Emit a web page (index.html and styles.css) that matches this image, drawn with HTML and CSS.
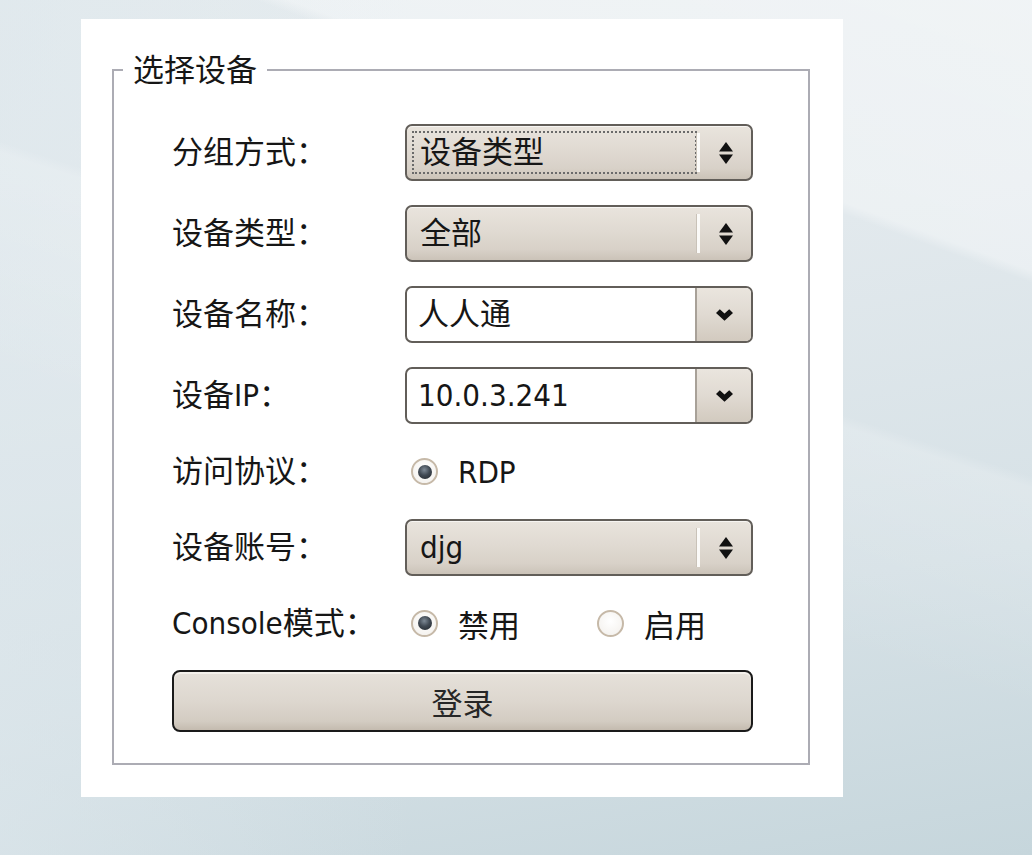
FILE: index.html
```html
<!DOCTYPE html>
<html lang="zh-CN">
<head>
<meta charset="utf-8">
<title>选择设备</title>
<link rel="stylesheet" href="styles.css">
</head>
<body>
<div class="panel">
  <fieldset class="group">
    <legend class="group-title">选择设备</legend>
    <div class="form">
      <div class="lbl">分组方式：</div>
      <div class="combo ro">
        <span class="val focus">设备类型</span>
        <span class="btn"><svg width="16" height="28" viewBox="0 0 16 28"><polygon points="1,12.5 8,3 15,12.5"/><polygon points="1,15.5 15,15.5 8,25"/></svg></span>
      </div>

      <div class="lbl">设备类型：</div>
      <div class="combo ro">
        <span class="val">全部</span>
        <span class="btn"><svg width="16" height="28" viewBox="0 0 16 28"><polygon points="1,12.5 8,3 15,12.5"/><polygon points="1,15.5 15,15.5 8,25"/></svg></span>
      </div>

      <div class="lbl">设备名称：</div>
      <div class="combo ed">
        <span class="val">人人通</span>
        <span class="btn"><svg width="17" height="12" viewBox="0 0 17 12"><polygon points="0,4 3.8,0.3 8.5,4.6 13.2,0.3 17,4 8.5,11.8"/></svg></span>
      </div>

      <div class="lbl">设备IP：</div>
      <div class="combo ed">
        <span class="val">10.0.3.241</span>
        <span class="btn"><svg width="17" height="12" viewBox="0 0 17 12"><polygon points="0,4 3.8,0.3 8.5,4.6 13.2,0.3 17,4 8.5,11.8"/></svg></span>
      </div>

      <div class="lbl">访问协议：</div>
      <div class="radios">
        <span class="opt"><span class="radio on"></span><span>RDP</span></span>
      </div>

      <div class="lbl">设备账号：</div>
      <div class="combo ro">
        <span class="val">djg</span>
        <span class="btn"><svg width="16" height="28" viewBox="0 0 16 28"><polygon points="1,12.5 8,3 15,12.5"/><polygon points="1,15.5 15,15.5 8,25"/></svg></span>
      </div>

      <div class="lbl">Console模式：</div>
      <div class="radios">
        <span class="opt first"><span class="radio on"></span><span>禁用</span></span>
        <span class="opt"><span class="radio"></span><span>启用</span></span>
      </div>

      <button class="login" type="button">登录</button>
    </div>
  </fieldset>
</div>
</body>
</html>
```

FILE: styles.css
```css
html, body {
  margin: 0;
  padding: 0;
}

body {
  width: 1032px;
  height: 855px;
  overflow: hidden;
  font-family: "DejaVu Sans Condensed", "DejaVu Sans", "Noto Sans CJK SC", sans-serif;
  font-size: 31px;
  color: #161616;
  background:
    linear-gradient(200deg, rgba(255,255,255,0.45) 0%, rgba(255,255,255,0.35) 22%, rgba(255,255,255,0) 23%),
    linear-gradient(198deg, rgba(255,255,255,0) 40%, rgba(255,255,255,0.18) 41%, rgba(255,255,255,0) 60%),
    linear-gradient(90deg, rgba(221,231,236,0.6) 0%, rgba(221,231,236,0) 40%),
    linear-gradient(170deg, #e6ecef 0%, #e2e9ed 35%, #d6e1e6 70%, #c6d6dc 100%);
  padding-top: 19px;
  box-sizing: border-box;
}

.panel {
  margin-left: 81px;
  width: 762px;
  height: 778px;
  background: #ffffff;
  padding-top: 34px;
  box-sizing: border-box;
}

.group {
  margin: 0 0 0 31px;
  width: 698px;
  box-sizing: border-box;
  border: 2px solid #acacb4;
  padding: 37px 0 31px 0;
}

.group-title {
  margin-left: 9px;
  padding: 0 10px;
  line-height: 34px;
}

.form {
  margin-left: 58px;
  display: grid;
  grid-template-columns: 233px 348px;
  grid-template-rows: 57px 57px 57px 57px 47px 57px 46px 62px;
  row-gap: 24px;
  align-items: center;
}

.lbl {
  white-space: nowrap;
  line-height: 1;
}

.combo {
  height: 57px;
  box-sizing: border-box;
  border: 2px solid #625e59;
  border-radius: 7px;
  display: flex;
  align-items: stretch;
  overflow: hidden;
}

.combo.ro {
  background: linear-gradient(#e9e4dd 0%, #e0dad2 45%, #d8d1c8 80%, #cbc3b8 100%);
  box-shadow: inset 0 1px 0 #f7f5f2;
}

.combo.ed {
  background: #ffffff;
}

.val {
  flex: 1;
  display: flex;
  align-items: center;
  padding-left: 11px;
  line-height: 1;
}

.combo.ro .val {
  margin: 5px 0 5px 5px;
  padding-left: 6px;
  border: 2px dotted transparent;
}

.combo.ro .val.focus {
  border-color: #6a6a6a;
}

.btn {
  width: 54px;
  display: flex;
  align-items: center;
  justify-content: center;
}

.btn svg {
  fill: #111111;
  display: block;
}

.combo.ro .btn {
  margin: 7px 0;
  border-left: 3px solid #fbfaf8;
  box-shadow: -1px 0 0 #c9c2b8;
  width: 51px;
}

.combo.ed .btn {
  border-left: 2px solid #a8a198;
  background: linear-gradient(#eae5de 0%, #e0dad2 50%, #d2cabf 100%);
}

.radios {
  display: flex;
  align-items: center;
  padding-left: 6px;
}

.opt {
  display: inline-flex;
  align-items: center;
  gap: 20px;
}

.opt.first {
  width: 186px;
}

.radio {
  width: 27px;
  height: 27px;
  box-sizing: border-box;
  border-radius: 50%;
  border: 2px solid #c6b9a8;
  background: radial-gradient(circle at 50% 40%, #ffffff 0%, #f6f4f1 70%, #e8e3dc 100%);
  display: flex;
  align-items: center;
  justify-content: center;
}

.radio.on::after {
  content: "";
  width: 14px;
  height: 14px;
  border-radius: 50%;
  background: radial-gradient(circle at 45% 35%, #7e8a96 0%, #414a54 45%, #1e2328 100%);
}

.login {
  grid-column: 1 / 3;
  height: 62px;
  box-sizing: border-box;
  border: 2px solid #1a1a1a;
  border-radius: 8px;
  background: linear-gradient(#e6e1da 0%, #ddd7cf 50%, #d3ccc2 85%, #c4bbaf 100%);
  box-shadow: inset 0 2px 0 #f4f1ec;
  font-family: "DejaVu Sans Condensed", "DejaVu Sans", "Noto Sans CJK SC", sans-serif;
  font-size: 31px;
  color: #262626;
  padding: 0;
}
```
